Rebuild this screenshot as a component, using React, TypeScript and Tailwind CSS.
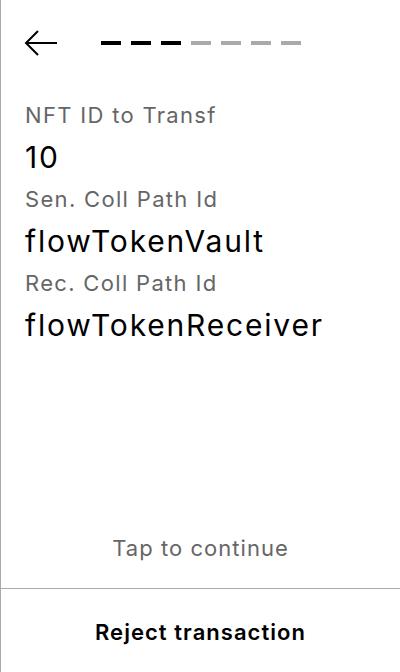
const steps = [true, true, true, false, false, false, false];

const fields = [
  { label: "NFT ID to Transf", value: "10" },
  { label: "Sen. Coll Path Id", value: "flowTokenVault" },
  { label: "Rec. Coll Path Id", value: "flowTokenReceiver" },
];

export default function App() {
  return (
    <div
      className="flex h-[672px] w-[400px] flex-col border-l border-[#aaaaaa] bg-white text-black tracking-[0.065em]"
      style={{ fontFamily: "Inter, 'Noto Sans', sans-serif" }}
    >
      <div className="flex h-[86px] items-center pl-[23px]">
        <svg width="34" height="28" viewBox="0 0 34 28" fill="none" stroke="black" strokeWidth="2">
          <path d="M33 14H2" />
          <path d="M14 2L2 14L14 26" />
        </svg>
        <div className="ml-[43px] flex gap-[10px]">
          {steps.map((done, i) => (
            <div key={i} className={`h-[4px] w-[20px] ${done ? "bg-black" : "bg-[#aaaaaa]"}`} />
          ))}
        </div>
      </div>

      <div className="flex flex-col px-[24px] pt-[9px]">
        {fields.map((f) => (
          <div key={f.label} className="flex flex-col">
            <span className="text-[22px] leading-[40px] tracking-[0.06em] text-[#666666]">{f.label}</span>
            <span className="text-[30px] leading-[44px] tracking-[0.06em]">{f.value}</span>
          </div>
        ))}
      </div>

      <div className="flex flex-1 flex-col justify-end pb-[20px]">
        <p className="text-center text-[22px] leading-[40px] text-[#666666]">Tap to continue</p>
      </div>

      <button className="h-[84px] w-full border-t border-[#aaaaaa] pt-[4px] text-center text-[22px] font-semibold">
        Reject transaction
      </button>
    </div>
  );
}
